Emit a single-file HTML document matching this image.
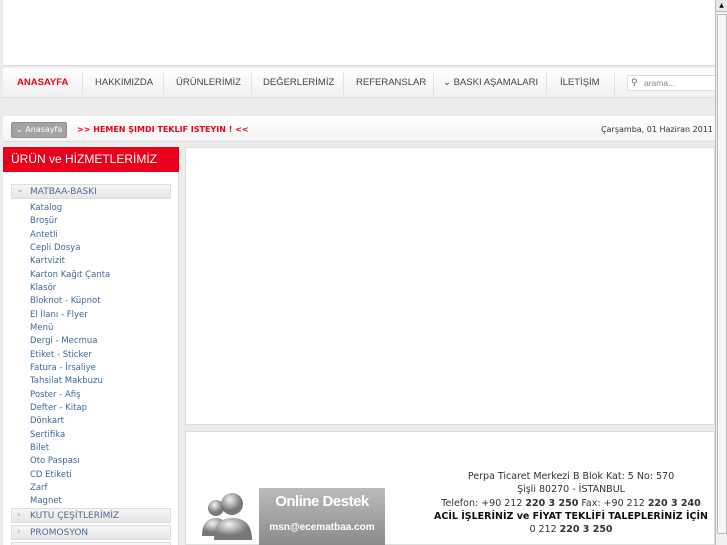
<!DOCTYPE html>
<html><head><meta charset="utf-8"><style>
*{margin:0;padding:0;box-sizing:border-box}
html,body{width:727px;height:545px;overflow:hidden}
body{background:#ececec;font-family:"DejaVu Sans","Liberation Sans",sans-serif;position:relative}
.abs{position:absolute}
.top{left:3px;top:0;width:712px;height:66px;background:#fff;border-bottom:1px solid #ddd}
.nav{left:3px;top:68px;width:712px;height:30px;background:linear-gradient(#fff,#f1f1f1);border-bottom:1px solid #ddd;font-family:"Liberation Sans",sans-serif;font-size:9.5px;color:#444}
.nav span{position:absolute;top:9px;white-space:nowrap}
.sep{position:absolute;top:5px;width:1px;height:22px;background:#e2e2e2}
.bc{left:3px;top:116px;width:712px;height:26px;background:linear-gradient(#fff,#f4f4f4);border-bottom:1px solid #ddd}
.left{left:3px;top:147px;width:176px;height:398px;background:#fff;border-right:1px solid #ddd}
.red{left:3px;top:147px;width:176px;height:25px;background:#e8001c;color:#fff;font-family:"Liberation Sans",sans-serif;font-size:12px;padding:5px 0 0 8px}
.item{position:absolute;left:30px;font-size:8.5px;color:#3d6a9a}
.grp{position:absolute;left:11px;width:160px;height:15px;background:linear-gradient(#f6f6f6,#e6e6e6);border:1px solid #ddd;font-size:9px;color:#4b6d95;padding:2px 0 0 18px}
.main{left:185px;top:147px;width:530px;height:278px;background:#fff;border:1px solid #ddd}
.foot{left:185px;top:431px;width:530px;height:114px;background:#fff;border:1px solid #ddd}
.sb{left:715px;top:0;width:12px;height:545px;background:#f0f0f0;border-left:1px solid #bbb}
</style></head><body>
<div class="abs top"></div>
<div class="abs nav">
<span style="left:14px;color:#e8001c;font-weight:bold">ANASAYFA</span>
<div class="sep" style="left:79px"></div>
<span style="left:92px">HAKKIMIZDA</span>
<div class="sep" style="left:160px"></div>
<span style="left:173px">ÜRÜNLERİMİZ</span>
<div class="sep" style="left:248px"></div>
<span style="left:260px">DEĞERLERİMİZ</span>
<div class="sep" style="left:340px"></div>
<span style="left:353px">REFERANSLAR</span>
<div class="sep" style="left:430px"></div>
<span style="left:440px">⌄ BASKI AŞAMALARI</span>
<div class="sep" style="left:543px"></div>
<span style="left:557px">İLETİŞİM</span>
<div class="sep" style="left:611px"></div>
<div style="position:absolute;left:624px;top:7px;width:90px;height:16px;background:#fff;border:1px solid #ddd;font-size:8.5px;color:#888;padding:2px 0 0 16px">arama...<span style="left:3px;top:1px;color:#666;font-size:9px">⚲</span></div>
</div>
<div class="abs bc">
<div style="position:absolute;left:8px;top:6px;width:56px;height:16px;background:#a3a3a3;border:1px solid #8f8f8f;border-radius:2px;color:#fff;font-size:8px;padding:2px 0 0 4px">⌄ Anasayfa</div>
<div style="position:absolute;left:74px;top:9px;font-size:8px;font-weight:bold;color:#e8001c">&gt;&gt; HEMEN ŞIMDI TEKLIF ISTEYIN ! &lt;&lt;</div>
<div style="position:absolute;right:2px;top:9px;font-size:8px;color:#333">Çarşamba, 01 Haziran 2011</div>
</div>
<div class="abs left"></div>
<div class="abs red">ÜRÜN ve HİZMETLERİMİZ</div>
<div class="grp" style="top:184px">MATBAA-BASKI<span style="position:absolute;left:4px;top:0;color:#999">⌄</span></div>
<div class="item" style="top:203px">Katalog</div>
<div class="item" style="top:216px">Broşür</div>
<div class="item" style="top:230px">Antetli</div>
<div class="item" style="top:243px">Cepli Dosya</div>
<div class="item" style="top:256px">Kartvizit</div>
<div class="item" style="top:270px">Karton Kağıt Çanta</div>
<div class="item" style="top:283px">Klasör</div>
<div class="item" style="top:296px">Bloknot - Küpnot</div>
<div class="item" style="top:310px">El İlanı - Flyer</div>
<div class="item" style="top:323px">Menü</div>
<div class="item" style="top:336px">Dergi - Mecmua</div>
<div class="item" style="top:350px">Etiket - Sticker</div>
<div class="item" style="top:363px">Fatura - İrsaliye</div>
<div class="item" style="top:376px">Tahsilat Makbuzu</div>
<div class="item" style="top:390px">Poster - Afiş</div>
<div class="item" style="top:403px">Defter - Kitap</div>
<div class="item" style="top:416px">Dönkart</div>
<div class="item" style="top:430px">Sertifika</div>
<div class="item" style="top:443px">Bilet</div>
<div class="item" style="top:456px">Oto Paspası</div>
<div class="item" style="top:470px">CD Etiketi</div>
<div class="item" style="top:483px">Zarf</div>
<div class="item" style="top:496px">Magnet</div>
<div class="grp" style="top:508px">KUTU ÇEŞİTLERİMİZ<span style="position:absolute;left:5px;top:1px;color:#999">›</span></div>
<div class="grp" style="top:525px">PROMOSYON<span style="position:absolute;left:5px;top:1px;color:#999">›</span></div>
<div class="grp" style="top:542px"></div>
<div class="abs main"></div>
<div class="abs foot">
<svg style="position:absolute;left:14px;top:58px" width="56" height="52" viewBox="0 0 56 52">
<defs><radialGradient id="g" cx=".4" cy=".3"><stop offset="0" stop-color="#f4f4f4"/><stop offset="1" stop-color="#777"/></radialGradient></defs>
<circle cx="16" cy="18" r="8" fill="url(#g)"/><path d="M2 46 Q2 28 16 28 Q28 28 28 46Z" fill="url(#g)"/>
<circle cx="32" cy="14" r="11" fill="url(#g)"/><path d="M14 50 Q14 28 32 28 Q52 28 52 50Z" fill="url(#g)"/>
</svg>
<div style="position:absolute;left:73px;top:56px;width:126px;height:58px;background:linear-gradient(#bbb,#8a8a8a);color:#fff;font-family:'Liberation Sans',sans-serif;text-align:center">
<div style="font-size:15px;font-weight:bold;margin-top:5px;letter-spacing:-.5px">Online Destek</div>
<div style="font-size:10px;font-weight:bold;margin-top:12px">msn@ecematbaa.com</div></div>
<div style="position:absolute;left:240px;top:38px;width:290px;text-align:center;font-size:9.5px;line-height:13.3px;color:#333">
Perpa Ticaret Merkezi B Blok Kat: 5 No: 570<br>Şişli 80270 - İSTANBUL<br>Telefon: +90 212 <b>220 3 250</b> Fax: +90 212 <b>220 3 240</b><br><b style="color:#111">ACİL İŞLERİNİZ ve FİYAT TEKLİFİ TALEPLERİNİZ İÇİN</b><br>0 212 <b>220 3 250</b></div>
</div>
<div class="abs sb"><div style="position:absolute;left:0;top:0;width:11px;height:12px;background:#e8e8e8;border-bottom:1px solid #bbb;font-size:6px;text-align:center;line-height:12px">▲</div>
<div style="position:absolute;left:1px;top:14px;width:10px;height:520px;background:#f8f8f8;border:1px solid #bbb"></div></div>
</body></html>
